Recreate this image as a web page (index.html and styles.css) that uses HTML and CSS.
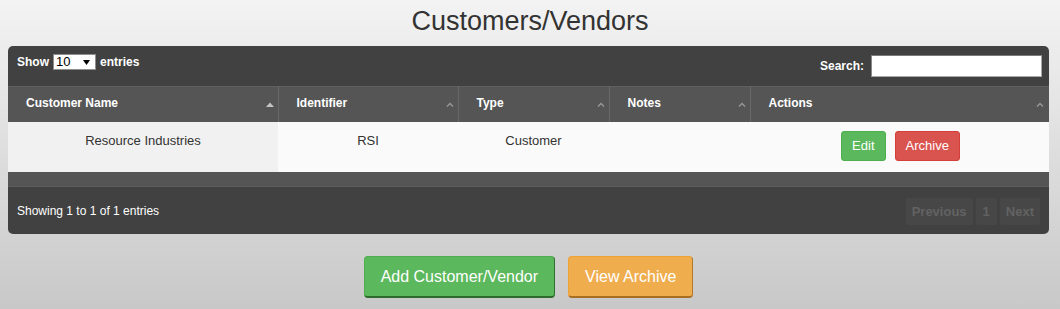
FILE: index.html
```html
<!DOCTYPE html>
<html>
<head>
<meta charset="utf-8">
<title>Customers/Vendors</title>
<link rel="stylesheet" href="styles.css">
</head>
<body>
<h1 class="title">Customers/Vendors</h1>
<div class="panel">
  <div class="toolbar">
    <div class="length">Show <span class="select"><span>10</span><svg class="caret" width="7" height="5" viewBox="0 0 7 5"><polygon points="0,0 7,0 3.5,5" fill="#000"/></svg></span> entries</div>
    <div class="search"><span>Search:</span><input type="text" class="search-box"></div>
  </div>
  <table class="grid">
    <colgroup>
      <col class="c1"><col class="c2"><col class="c3"><col class="c4"><col class="c5">
    </colgroup>
    <thead>
      <tr>
        <th><div class="th-inner"><span>Customer Name</span><svg class="sort" width="8" height="5" viewBox="0 0 8 5"><polygon points="0,5 4,0.5 8,5" fill="#c4c4c4"/></svg></div></th>
        <th><div class="th-inner"><span>Identifier</span><svg class="sort" width="8" height="5" viewBox="0 0 8 5"><polyline points="1,4.5 4,1.5 7,4.5" fill="none" stroke="#9a9a9a" stroke-width="1.3"/></svg></div></th>
        <th><div class="th-inner"><span>Type</span><svg class="sort" width="8" height="5" viewBox="0 0 8 5"><polyline points="1,4.5 4,1.5 7,4.5" fill="none" stroke="#9a9a9a" stroke-width="1.3"/></svg></div></th>
        <th><div class="th-inner"><span>Notes</span><svg class="sort" width="8" height="5" viewBox="0 0 8 5"><polyline points="1,4.5 4,1.5 7,4.5" fill="none" stroke="#9a9a9a" stroke-width="1.3"/></svg></div></th>
        <th class="last"><div class="th-inner"><span>Actions</span><svg class="sort" width="8" height="5" viewBox="0 0 8 5"><polyline points="1,4.5 4,1.5 7,4.5" fill="none" stroke="#9a9a9a" stroke-width="1.3"/></svg></div></th>
      </tr>
    </thead>
    <tbody>
      <tr>
        <td class="sorted">Resource Industries</td>
        <td>RSI</td>
        <td>Customer</td>
        <td></td>
        <td><div class="actions"><button class="btn btn-edit">Edit</button><button class="btn btn-archive">Archive</button></div></td>
      </tr>
    </tbody>
  </table>
  <div class="strip"></div>
  <div class="footer">
    <div class="info">Showing 1 to 1 of 1 entries</div>
    <div class="pager">
      <span class="page">Previous</span>
      <span class="page num">1</span>
      <span class="page">Next</span>
    </div>
  </div>
</div>
<div class="cta">
  <button class="big big-green">Add Customer/Vendor</button>
  <button class="big big-orange">View Archive</button>
</div>
</body>
</html>
```
FILE: styles.css
```css
html {
  background: #c9c9c9;
}
body {
  margin: 0;
  height: 309px;
  font-family: "Liberation Sans", Arial, sans-serif;
  background: linear-gradient(#f3f3f3, #c8c8c8);
  overflow: hidden;
}
.title {
  margin: 6px 0 10px;
  font-size: 27px;
  line-height: 30px;
  font-weight: normal;
  text-align: center;
  color: #333;
}
.panel {
  margin: 0 11px 0 8px;
  background: #414141;
  border-radius: 5px;
  overflow: hidden;
}
.toolbar {
  display: flex;
  justify-content: space-between;
  align-items: flex-start;
  height: 40px;
  padding: 0 7px 0 9px;
  box-sizing: border-box;
  color: #fff;
  font-weight: bold;
  font-size: 12px;
}
.length {
  margin-top: 8px;
  height: 16px;
  display: flex;
  align-items: center;
  gap: 4px;
}
.select {
  width: 43px;
  height: 16px;
  box-sizing: border-box;
  background: #fff;
  border: 1px solid #8f8f8f;
  display: flex;
  align-items: center;
  justify-content: space-between;
  padding: 0 5px 0 2px;
  color: #000;
  font-weight: normal;
  font-size: 13px;
  line-height: 14px;
}
.caret {
  display: block;
}
.search {
  margin-top: 9px;
  height: 22px;
  display: flex;
  align-items: center;
  gap: 7px;
}
.search-box {
  width: 171px;
  height: 22px;
  box-sizing: border-box;
  margin: 0;
  padding: 0 3px;
  border: 1px solid #a9a9a9;
  border-top-color: #7a7a7a;
  border-left-color: #8a8a8a;
  background: #fff;
  outline: none;
}
.grid {
  width: 100%;
  border-collapse: collapse;
  table-layout: fixed;
}
.c1 { width: 270px; }
.c2 { width: 180px; }
.c3 { width: 151px; }
.c4 { width: 141px; }
.c5 { width: 299px; }
.grid thead tr {
  height: 36px;
}
.grid th {
  padding: 0 4px 3px 18px;
  background: #555;
  box-shadow: inset 0 1px 0 #5f5f5f;
  border-right: 1px solid #686868;
  color: #fff;
  font-size: 12px;
  font-weight: bold;
  text-align: left;
}
.grid th.last {
  border-right: none;
  padding-right: 5px;
}
.th-inner {
  display: flex;
  justify-content: space-between;
  align-items: center;
}
.sort {
  display: block;
  margin-top: 3px;
}
.grid td {
  padding: 9px 10px 11px;
  background: #fafafa;
  color: #333;
  font-size: 13px;
  line-height: 20px;
  text-align: center;
  vertical-align: top;
}
.grid td.sorted {
  background: #f1f1f1;
}
.actions {
  display: flex;
  justify-content: center;
  gap: 9px;
  padding-left: 2px;
}
.btn {
  font-family: "Liberation Sans", Arial, sans-serif;
  font-size: 13px;
  line-height: 16px;
  padding: 6px 10px;
  border: 1px solid;
  border-radius: 3px;
  color: #fff;
  margin: 0;
}
.btn-edit {
  background: #5cb85c;
  border-color: #4cae4c;
}
.btn-archive {
  background: #d9534f;
  border-color: #d43f3a;
}
.strip {
  height: 14px;
  background: #555;
  border-bottom: 1px solid #5d5d5d;
}
.footer {
  height: 47px;
  display: flex;
  align-items: center;
  justify-content: space-between;
  padding: 0 9px 0 9px;
  color: #fff;
  font-size: 12px;
}
.pager {
  display: flex;
  gap: 3px;
  margin-top: 1px;
}
.page {
  height: 27px;
  line-height: 27px;
  padding: 0 6px;
  background: #474747;
  color: #626262;
  font-weight: bold;
  font-size: 13px;
  border-radius: 2px;
}
.page.num {
  padding: 0 7px;
}
.cta {
  display: flex;
  justify-content: center;
  gap: 13px;
  margin-top: 22px;
  padding-right: 3px;
}
.big {
  font-family: "Liberation Sans", Arial, sans-serif;
  font-size: 16px;
  line-height: 22px;
  padding: 9px 16px 8px;
  border: 1px solid;
  border-bottom-width: 2px;
  border-radius: 4px;
  color: #fff;
  margin: 0;
}
.big-green {
  background: #5cb85c;
  border-color: #4cae4c #2f6f2f #2d6a2d #4cae4c;
}
.big-orange {
  background: #f0ad4e;
  border-color: #eea236 #b3782a #a86f22 #eea236;
}
```
